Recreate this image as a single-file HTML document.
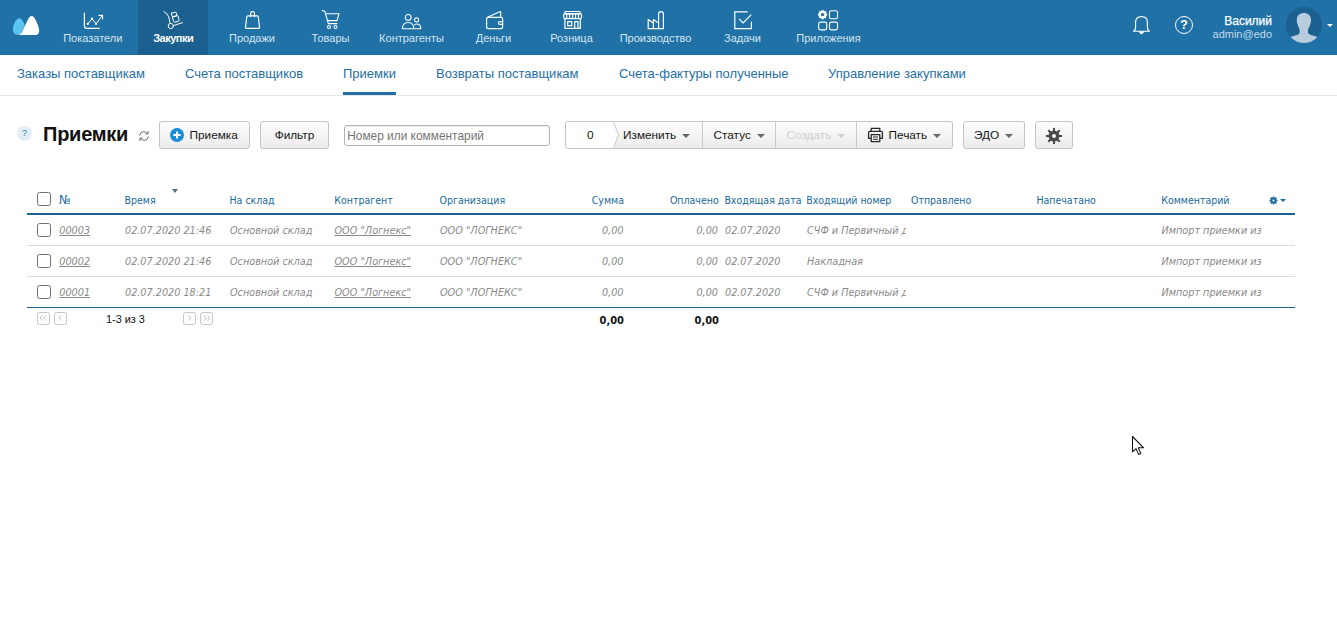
<!DOCTYPE html>
<html lang="ru">
<head>
<meta charset="utf-8">
<title>Приемки</title>
<style>
*{box-sizing:border-box;margin:0;padding:0}
html,body{width:1337px;height:635px;overflow:hidden;background:#fff}
body{font-family:"Liberation Sans",Arial,sans-serif;font-size:12px;color:#000;position:relative}
.abs{position:absolute;white-space:nowrap}
/* top bar */
#top{position:absolute;left:0;top:0;width:1337px;height:55px;background:#1f71a6}
#top .act{position:absolute;left:138px;top:0;width:70px;height:55px;background:#1b608e}
.nl{position:absolute;top:31px;font-size:11px;line-height:14px;color:#d6e6f2;white-space:nowrap;transform:translateX(-50%)}
.nl.b{color:#fff;font-weight:bold;letter-spacing:-0.5px}
.ni{position:absolute;top:8px}
/* sub nav */
#sub{position:absolute;left:0;top:55px;width:1337px;height:41px;border-bottom:1px solid #e6e6e6;background:#fff}
.sl{position:absolute;top:11px;font-size:13px;line-height:16px;color:#1f6fa3;white-space:nowrap}
#sub .ul{position:absolute;left:343px;top:37px;width:53px;height:3px;background:#1f6fa3}
/* toolbar */
.btn{position:absolute;top:121px;height:28px;border:1px solid #c4c4c4;border-radius:3px;background:linear-gradient(#fdfdfd,#ececec);font-size:11.8px;line-height:26px;color:#161616;white-space:nowrap}
.caret{display:inline-block;width:0;height:0;border-left:4px solid transparent;border-right:4px solid transparent;border-top:4px solid #666;vertical-align:middle;margin-left:6px;position:relative;top:0.5px}
/* table */
.tb{font-family:"DejaVu Sans Condensed","DejaVu Sans","Liberation Sans",sans-serif}
.th{position:absolute;top:193px;font-size:10.5px;line-height:14px;color:#1a6a9c;white-space:nowrap}
.td{position:absolute;font-size:10.75px;line-height:14px;color:#8a8a8a;font-style:italic;white-space:nowrap}
.td.u{text-decoration:underline}
.hl{position:absolute;left:27px;width:1268px}
.cb{position:absolute;left:37px;width:14px;height:14px;border:1px solid #707070;border-radius:2.5px;background:#fff}
</style>
</head>
<body>
<div id="top">
  <div class="act"></div>
  <!-- logo -->
  <svg class="abs" style="left:12px;top:15px" width="28" height="21" viewBox="0 0 28 21">
    <path d="M6.6 19.9 C3 19.9 0.9 18 0.9 14.5 C0.9 9 4.5 3.2 7.2 3.2 C9.8 3.2 11.8 7.5 12.8 10.8 L9.5 17.5 C8.5 19.3 7.5 19.9 6.6 19.9Z" fill="#5bc4f1"/>
    <path d="M6.6 19.9 C8.5 19.5 9.5 18 10.5 16 L15.7 4.9 C17.2 1.8 18.5 0.9 19.6 0.9 C21 0.9 22.3 2.2 23.6 4.9 C25.5 8.8 27.2 13 27.2 15.7 C27.2 18.5 25.8 19.9 23.5 19.9 Z" fill="#fff"/>
  </svg>
  <!-- nav icons -->
  <svg class="abs" style="left:83px;top:11px" width="22" height="20" viewBox="0 0 22 20" fill="none" stroke="#fff" stroke-width="1.2" stroke-linecap="round" stroke-linejoin="round">
    <path d="M1.4 2 V15 Q1.4 17.4 3.8 17.4 H16.4"/><path d="M4.75 12.9 L9 7.7 L13 12.9 L19.2 4.8" stroke-width="1"/><path d="M15.9 4.3 L19.5 4.4 L19.6 7.8"/><g fill="#fff" stroke="none"><circle cx="4.75" cy="12.9" r="1.1"/><circle cx="9" cy="7.7" r="1.1"/><circle cx="13" cy="12.9" r="1.1"/></g>
  </svg>
  <svg class="abs" style="left:162px;top:10px" width="22" height="21" viewBox="0 0 22 21" fill="none" stroke="#fff" stroke-width="1" stroke-linecap="round" stroke-linejoin="round">
    <path d="M2 1.6 Q5.6 3.5 6.7 6.8 L8.1 13.2"/><circle cx="8.8" cy="16" r="2.6"/><path d="M11.7 15.5 L20.4 12.7"/>
    <path d="M9.6 3.2 L13.4 2.2 Q14 2.1 14.2 2.7 L14.9 5.6 L10.6 6.8 L9.3 3.9 Q9.1 3.4 9.6 3.2Z"/><path d="M10.6 7 L15.4 5.7 Q16 5.6 16.2 6.2 L17.1 10.4 Q17.2 11 16.6 11.2 L12.6 12.3 Q12 12.4 11.8 11.8 Z"/>
  </svg>
  <svg class="abs" style="left:243px;top:10px" width="19" height="20" viewBox="0 0 19 20" fill="none" stroke="#fff" stroke-width="1.2" stroke-linecap="round" stroke-linejoin="round">
    <path d="M4.8 5.8 H14.3 Q15.2 5.8 15.3 6.8 L16.5 17 Q16.6 18.4 15.3 18.4 H3.7 Q2.4 18.4 2.5 17 L3.8 6.8 Q3.9 5.8 4.8 5.8Z"/><path d="M7.7 6.6 V3.6 Q7.7 1.5 9.6 1.5 Q11.5 1.5 11.5 3.6 V6.6"/>
  </svg>
  <svg class="abs" style="left:320px;top:9px" width="21" height="21" viewBox="0 0 21 21" fill="none" stroke="#fff" stroke-width="1.1" stroke-linecap="round" stroke-linejoin="round">
    <path d="M2.2 1.6 L4.8 2.2 L8.3 14.6 H17"/><path d="M5.6 4.8 H19 L17 11.6 H7.5"/><circle cx="9" cy="18" r="1.5"/><circle cx="15.5" cy="18" r="1.5"/>
  </svg>
  <svg class="abs" style="left:401px;top:13px" width="22" height="18" viewBox="0 0 22 18" fill="none" stroke="#fff" stroke-width="1.05" stroke-linecap="round" stroke-linejoin="round">
    <circle cx="7.2" cy="4.4" r="2.9"/><path d="M1.3 15.8 Q1.6 9.4 7.2 9.4 Q12.6 9.4 13 15.8 Z"/><circle cx="15.6" cy="6.8" r="2.1"/><path d="M14 15.8 H19.8 Q19.6 11 15.8 11 Q14.6 11 13.6 11.8"/>
  </svg>
  <svg class="abs" style="left:485px;top:10px" width="20" height="20" viewBox="0 0 20 20" fill="none" stroke="#fff" stroke-width="1.2" stroke-linecap="round" stroke-linejoin="round">
    <path d="M1.6 8.8 Q1.6 7.4 3 7.4 H16 Q17.6 7.4 17.6 8.8 V17 Q17.6 18.6 16 18.6 H3.2 Q1.6 18.6 1.6 17 Z"/><path d="M2.6 7.2 L14.6 1.7 Q15.6 1.4 15.6 2.5 V7.2"/><path d="M17.6 11.6 H14.8 Q13.4 11.6 13.4 13 Q13.4 14.4 14.8 14.4 H17.6"/>
  </svg>
  <svg class="abs" style="left:562px;top:10px" width="22" height="20" viewBox="0 0 22 20" fill="none" stroke="#fff" stroke-width="1.2" stroke-linecap="round" stroke-linejoin="round">
    <rect x="2.9" y="1.5" width="15.4" height="2.2" rx="1"/><path d="M1.7 4 H19.5 V7.4 Q19.5 8.6 18.3 8.6 H2.9 Q1.7 8.6 1.7 7.4 Z"/><path d="M4.7 4.2 V8.4 M7.65 4.2 V8.4 M10.6 4.2 V8.4 M13.55 4.2 V8.4 M16.5 4.2 V8.4"/>
    <path d="M2.9 8.8 V18.4 H18.3 V8.8"/><rect x="5.7" y="11.6" width="4.1" height="4.1"/><path d="M12.7 18.2 V11.6 H16 V18.2"/>
  </svg>
  <svg class="abs" style="left:646px;top:10px" width="20" height="20" viewBox="0 0 20 20" fill="none" stroke="#fff" stroke-width="1.2" stroke-linecap="round" stroke-linejoin="round">
    <path d="M2.2 18.6 V9.6 L7.4 13 V9.6 L12.6 13 V4 Q12.6 1.6 15 1.6 Q17.4 1.6 17.4 4 V18.6 Z"/><path d="M7.4 13 V18.4 M12.6 13 V18.4"/>
  </svg>
  <svg class="abs" style="left:732px;top:10px" width="22" height="21" viewBox="0 0 22 21" fill="none" stroke="#fff" stroke-width="1.2" stroke-linecap="round" stroke-linejoin="round">
    <path d="M19.4 11.6 V18.6 H2.8 V1.8 H15.6" stroke-linejoin="miter" stroke-linecap="butt"/><path d="M7.4 9.2 L11 13 L19 4.8" stroke-width="1.1"/>
  </svg>
  <svg class="abs" style="left:817px;top:9px" width="23" height="23" viewBox="0 0 23 23" fill="none" stroke="#fff" stroke-width="1.1">
    <rect x="12.5" y="1.7" width="8" height="8" rx="1.8"/><rect x="1.7" y="13.1" width="8" height="7.8" rx="1.8"/><rect x="12.5" y="13.1" width="8" height="7.8" rx="1.8"/>
    <g transform="translate(5.6 5.6)" fill="#fff" stroke="none"><path fill-rule="evenodd" d="M-1 -4.6 H1 L1.3 -3.3 L2.5 -3.9 L3.9 -2.5 L3.3 -1.3 L4.6 -1 V1 L3.3 1.3 L3.9 2.5 L2.5 3.9 L1.3 3.3 L1 4.6 H-1 L-1.3 3.3 L-2.5 3.9 L-3.9 2.5 L-3.3 1.3 L-4.6 1 V-1 L-3.3 -1.3 L-3.9 -2.5 L-2.5 -3.9 L-1.3 -3.3 Z M0 -1.7 A1.7 1.7 0 1 0 0 1.7 A1.7 1.7 0 1 0 0 -1.7Z"/></g>
  </svg>
  <span class="nl" style="left:92.8px">Показатели</span>
  <span class="nl b" style="left:173.2px">Закупки</span>
  <span class="nl" style="left:252px">Продажи</span>
  <span class="nl" style="left:330.5px">Товары</span>
  <span class="nl" style="left:411.5px">Контрагенты</span>
  <span class="nl" style="left:493.5px">Деньги</span>
  <span class="nl" style="left:571.5px">Розница</span>
  <span class="nl" style="left:655.5px">Производство</span>
  <span class="nl" style="left:742.5px">Задачи</span>
  <span class="nl" style="left:828.5px">Приложения</span>
  <!-- right side -->
  <svg class="abs" style="left:1131px;top:14px" width="21" height="22" viewBox="0 0 21 22" fill="none" stroke="#fff" stroke-width="1.15" stroke-linecap="round" stroke-linejoin="round">
    <path d="M2.6 17.2 Q4.6 16.2 4.6 13 V8.2 Q4.6 2.6 10.5 2.6 Q16.4 2.6 16.4 8.2 V13 Q16.4 16.2 18.4 17.2 Z"/><path d="M8.6 18 L10.5 19.8 L12.4 18 Z" fill="#fff"/>
  </svg>
  <div class="abs" style="left:1175px;top:16px;width:18px;height:18px;border:1.4px solid #fff;border-radius:50%;color:#fff;font-weight:bold;font-size:13px;line-height:16.5px;text-align:center">?</div>
  <span class="abs" style="right:65px;top:14px;font-size:12px;line-height:14px;color:#fff;-webkit-text-stroke:0.25px #fff">Василий</span>
  <span class="abs" style="right:65px;top:27px;font-size:11px;line-height:14px;color:#c3d9ea">admin@edo</span>
  <svg class="abs" style="left:1286px;top:7px" width="36" height="36" viewBox="0 0 36 36">
    <defs><clipPath id="av"><circle cx="18" cy="18" r="18"/></clipPath></defs>
    <circle cx="18" cy="18" r="18" fill="#1b608e"/>
    <g clip-path="url(#av)" fill="#b7cddd"><path d="M18 5.9 C22 5.9 25 8.5 25 12.5 C25 15 24.6 16.5 24 18 C23.2 20.5 22 21.5 21.9 23 V24.5 C21.9 26.5 23 27.3 25 28 L31 29.8 L34 36 H2 L4.9 29.8 L11 28 C13 27.3 13.6 26.5 13.6 24.5 V23 C13.5 21.5 12.6 20.5 11.8 18 C11.2 16.5 10.8 15 10.8 12.5 C10.8 8.5 14 5.9 18 5.9Z"/></g>
  </svg>
  <div class="abs" style="left:1327px;top:24px;border-left:3px solid transparent;border-right:3px solid transparent;border-top:3px solid #fff"></div>
</div>
<div id="sub">
  <span class="sl" style="left:17px">Заказы поставщикам</span>
  <span class="sl" style="left:185px">Счета поставщиков</span>
  <span class="sl" style="left:343px">Приемки</span>
  <span class="sl" style="left:436px">Возвраты поставщикам</span>
  <span class="sl" style="left:619px">Счета-фактуры полученные</span>
  <span class="sl" style="left:828px">Управление закупками</span>
  <div class="ul"></div>
</div>
<div class="abs" style="left:17px;top:126px;width:15px;height:15px;border-radius:50%;background:#e3edf6;color:#3d83b5;font-size:9px;line-height:15px;text-align:center">?</div>
<span class="abs" style="left:43px;top:122px;font-size:20px;line-height:24px;font-weight:bold;color:#111;letter-spacing:-0.25px">Приемки</span>
<svg class="abs" style="left:138px;top:130px" width="12" height="12" viewBox="0 0 12 12" fill="none" stroke="#707070" stroke-width="1" stroke-linecap="round" stroke-linejoin="round">
  <path d="M1.6 5.2 A4.5 4.5 0 0 1 9.6 3.4"/><path d="M10.1 1.4 V3.9 H7.6"/><path d="M10.4 6.8 A4.5 4.5 0 0 1 2.4 8.6"/><path d="M1.9 10.6 V8.1 H4.4"/>
</svg>
<div class="btn" style="left:159px;width:91px"><svg class="abs" style="left:10px;top:6px" width="14" height="14" viewBox="0 0 14 14"><circle cx="7" cy="7" r="7" fill="#1a8dd8"/><path d="M7 3.4 V10.6 M3.4 7 H10.6" stroke="#fff" stroke-width="2"/></svg><span class="abs" style="left:29.5px;top:0">Приемка</span></div>
<div class="btn" style="left:260px;width:69px;text-align:center">Фильтр</div>
<div class="abs" style="left:344px;top:125px;width:206px;height:21px;border:1px solid #b4b4b4;border-radius:3px;background:#fff;box-shadow:inset 0 1px 1px rgba(0,0,0,.08);font-size:11.9px;line-height:20px;color:#757575;padding-left:2.2px">Номер или комментарий</div>
<div class="btn" style="left:565px;width:388px">
  <div class="abs" style="left:0;top:0;width:49px;height:26px;background:#fff;border-radius:2px 0 0 2px"></div>
  <svg class="abs" style="left:46px;top:0" width="8" height="26" viewBox="0 0 8 26"><path d="M0 0 H1.5 L6.5 13 L1.5 26 H0Z" fill="#fff"/><path d="M1.5 0 L6.5 13 L1.5 26" fill="none" stroke="#c9c9c9" stroke-width="1"/></svg>
  <span class="abs" style="left:21px;top:0">0</span>
  <span class="abs" style="left:57px;top:0">Изменить<i class="caret"></i></span>
  <div class="abs" style="left:136px;top:0;width:1px;height:26px;background:#c9c9c9"></div>
  <span class="abs" style="left:147.5px;top:0">Статус<i class="caret"></i></span>
  <div class="abs" style="left:209px;top:0;width:1px;height:26px;background:#c9c9c9"></div>
  <span class="abs" style="left:220.5px;top:0;color:#cfcfcf">Создать<i class="caret" style="border-top-color:#cfcfcf"></i></span>
  <div class="abs" style="left:290px;top:0;width:1px;height:26px;background:#c9c9c9"></div>
  <svg class="abs" style="left:301px;top:5px" width="17" height="16" viewBox="0 0 17 16" fill="none" stroke="#2a2a2a" stroke-width="1.3" stroke-linejoin="round">
    <path d="M4.2 4.4 V1.4 H12.8 V4.4"/><path d="M4.2 11.4 H1.6 V5.6 Q1.6 4.4 2.8 4.4 H14.2 Q15.4 4.4 15.4 5.6 V11.4 H12.8"/><rect x="4.2" y="7.6" width="8.6" height="7"/><path d="M6 10 H11 M6 12.3 H11" stroke-width="1"/>
  </svg>
  <span class="abs" style="left:322.5px;top:0">Печать<i class="caret"></i></span>
</div>
<div class="btn" style="left:963px;width:62px"><span class="abs" style="left:10px;top:0">ЭДО<i class="caret" style="margin-left:6px"></i></span></div>
<div class="btn" style="left:1035px;width:38px">
  <svg class="abs" style="left:9.4px;top:4.5px" width="18" height="18" viewBox="-9 -9 18 18" fill="#4a4a4a"><rect x="-1" y="-8.1" width="2" height="5" transform="rotate(0)"/><rect x="-1" y="-8.1" width="2" height="5" transform="rotate(45)"/><rect x="-1" y="-8.1" width="2" height="5" transform="rotate(90)"/><rect x="-1" y="-8.1" width="2" height="5" transform="rotate(135)"/><rect x="-1" y="-8.1" width="2" height="5" transform="rotate(180)"/><rect x="-1" y="-8.1" width="2" height="5" transform="rotate(225)"/><rect x="-1" y="-8.1" width="2" height="5" transform="rotate(270)"/><rect x="-1" y="-8.1" width="2" height="5" transform="rotate(315)"/><path fill-rule="evenodd" d="M0 -5.5 A5.5 5.5 0 1 0 0 5.5 A5.5 5.5 0 1 0 0 -5.5Z M0 -2 A2 2 0 1 1 0 2 A2 2 0 1 1 0 -2Z"/></svg>
</div>

<div class="tb">
<div class="cb" style="top:192px"></div>
<span class="th" style="left:59px;font-size:12.5px;letter-spacing:0.3px">№</span>
<span class="th" style="left:124.5px">Время</span>
<span class="th" style="left:229.5px">На склад</span>
<span class="th" style="left:334.3px">Контрагент</span>
<span class="th" style="left:439.5px">Организация</span>
<span class="th" style="right:713px">Сумма</span>
<span class="th" style="right:618.3px">Оплачено</span>
<span class="th" style="left:724.4px">Входящая дата</span>
<span class="th" style="left:806.2px">Входящий номер</span>
<span class="th" style="left:911px">Отправлено</span>
<span class="th" style="left:1036.4px">Напечатано</span>
<span class="th" style="left:1161.2px">Комментарий</span>
<div class="abs" style="left:172px;top:189px;border-left:3px solid transparent;border-right:3px solid transparent;border-top:4px solid #5b6b80"></div>
<svg class="abs" style="left:1268.5px;top:196px" width="9" height="9" viewBox="-4.5 -4.5 9 9" fill="#1a6a9c"><rect x="-0.8" y="-4" width="1.6" height="2.5" transform="rotate(0)"/><rect x="-0.8" y="-4" width="1.6" height="2.5" transform="rotate(45)"/><rect x="-0.8" y="-4" width="1.6" height="2.5" transform="rotate(90)"/><rect x="-0.8" y="-4" width="1.6" height="2.5" transform="rotate(135)"/><rect x="-0.8" y="-4" width="1.6" height="2.5" transform="rotate(180)"/><rect x="-0.8" y="-4" width="1.6" height="2.5" transform="rotate(225)"/><rect x="-0.8" y="-4" width="1.6" height="2.5" transform="rotate(270)"/><rect x="-0.8" y="-4" width="1.6" height="2.5" transform="rotate(315)"/><path fill-rule="evenodd" d="M0 -3 A3 3 0 1 0 0 3 A3 3 0 1 0 0 -3Z M0 -1.1 A1.1 1.1 0 1 1 0 1.1 A1.1 1.1 0 1 1 0 -1.1Z"/></svg>
<div class="abs" style="left:1279.5px;top:199px;border-left:3px solid transparent;border-right:3px solid transparent;border-top:3px solid #1a6a9c"></div>
<div class="hl" style="top:213px;height:2px;background:#1a6394"></div>
<div class="cb" style="top:223px"></div>
<span class="td u" style="left:59.3px;top:224px">00003</span>
<span class="td" style="left:125px;top:224px">02.07.2020 21:46</span>
<span class="td" style="left:230px;top:224px">Основной склад</span>
<span class="td u" style="left:334.5px;top:224px">ООО "Логнекс"</span>
<span class="td" style="left:440px;top:224px">ООО "ЛОГНЕКС"</span>
<span class="td" style="right:713.5px;top:224px">0,00</span>
<span class="td" style="right:619px;top:224px">0,00</span>
<span class="td" style="left:725px;top:224px">02.07.2020</span>
<span class="td" style="left:807px;top:224px;width:98.5px;overflow:hidden">СЧФ и Первичный документ</span>
<span class="td" style="left:1161.5px;top:224px">Импорт приемки из</span>
<div class="hl" style="top:245px;height:1px;background:#dedede"></div>
<div class="cb" style="top:254px"></div>
<span class="td u" style="left:59.3px;top:255px">00002</span>
<span class="td" style="left:125px;top:255px">02.07.2020 21:46</span>
<span class="td" style="left:230px;top:255px">Основной склад</span>
<span class="td u" style="left:334.5px;top:255px">ООО "Логнекс"</span>
<span class="td" style="left:440px;top:255px">ООО "ЛОГНЕКС"</span>
<span class="td" style="right:713.5px;top:255px">0,00</span>
<span class="td" style="right:619px;top:255px">0,00</span>
<span class="td" style="left:725px;top:255px">02.07.2020</span>
<span class="td" style="left:807px;top:255px;width:98.5px;overflow:hidden">Накладная</span>
<span class="td" style="left:1161.5px;top:255px">Импорт приемки из</span>
<div class="hl" style="top:276px;height:1px;background:#dedede"></div>
<div class="cb" style="top:285px"></div>
<span class="td u" style="left:59.3px;top:286px">00001</span>
<span class="td" style="left:125px;top:286px">02.07.2020 18:21</span>
<span class="td" style="left:230px;top:286px">Основной склад</span>
<span class="td u" style="left:334.5px;top:286px">ООО "Логнекс"</span>
<span class="td" style="left:440px;top:286px">ООО "ЛОГНЕКС"</span>
<span class="td" style="right:713.5px;top:286px">0,00</span>
<span class="td" style="right:619px;top:286px">0,00</span>
<span class="td" style="left:725px;top:286px">02.07.2020</span>
<span class="td" style="left:807px;top:286px;width:98.5px;overflow:hidden">СЧФ и Первичный документ</span>
<span class="td" style="left:1161.5px;top:286px">Импорт приемки из</span>
<div class="hl" style="top:307px;height:1px;background:#1a6394"></div>
<svg class="abs" style="left:37px;top:312px" width="13" height="13" viewBox="0 0 13 13" fill="none"><rect x="0.5" y="0.5" width="12" height="12" rx="2" stroke="#c6c6c6" fill="#fdfdfd"/><path d="M5.6 3.5 L3.2 6 L5.6 8.5 M9 3.5 L6.6 6 L9 8.5" stroke="#b8b8b8" stroke-width="0.9"/></svg>
<svg class="abs" style="left:54px;top:312px" width="13" height="13" viewBox="0 0 13 13" fill="none"><rect x="0.5" y="0.5" width="12" height="12" rx="2" stroke="#c6c6c6" fill="#fdfdfd"/><path d="M7.4 3.5 L5 6 L7.4 8.5" stroke="#b8b8b8" stroke-width="0.9"/></svg>
<svg class="abs" style="left:183px;top:312px" width="13" height="13" viewBox="0 0 13 13" fill="none"><rect x="0.5" y="0.5" width="12" height="12" rx="2" stroke="#c6c6c6" fill="#fdfdfd"/><path d="M5.6 3.5 L8 6 L5.6 8.5" stroke="#b8b8b8" stroke-width="0.9"/></svg>
<svg class="abs" style="left:200px;top:312px" width="13" height="13" viewBox="0 0 13 13" fill="none"><rect x="0.5" y="0.5" width="12" height="12" rx="2" stroke="#c6c6c6" fill="#fdfdfd"/><path d="M4 3.5 L6.4 6 L4 8.5 M7.4 3.5 L9.8 6 L7.4 8.5" stroke="#b8b8b8" stroke-width="0.9"/></svg>
<span class="abs" style="left:106px;top:313px;font-family:'Liberation Sans',sans-serif;font-size:10.9px;line-height:13px;color:#111">1-3 из 3</span>
<span class="abs" style="right:713px;top:314px;font-size:11px;line-height:14px;font-weight:bold;color:#111">0,00</span>
<span class="abs" style="right:618px;top:314px;font-size:11px;line-height:14px;font-weight:bold;color:#111">0,00</span>
</div>
<svg class="abs" style="left:1131px;top:435px" width="14" height="21" viewBox="0 0 14 21"><path d="M1.5 1.5 V16.8 L5 13.6 L7.6 19.4 L9.8 18.4 L7.3 12.8 H12.6 Z" fill="#fff" stroke="#14141e" stroke-width="1.1" stroke-linejoin="round"/></svg>
</body>
</html>
